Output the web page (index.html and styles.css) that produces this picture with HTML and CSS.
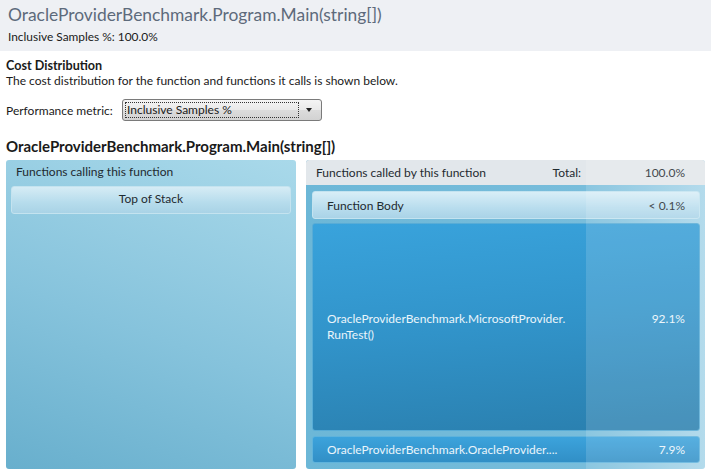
FILE: index.html
```html
<!DOCTYPE html>
<html>
<head>
<meta charset="utf-8">
<link rel="stylesheet" href="styles.css">
</head>
<body>
<div class="header">
  <div class="title">OracleProviderBenchmark.Program.Main(string[])</div>
  <div class="subtitle">Inclusive Samples %: 100.0%</div>
</div>
<div class="content">
  <div class="section-title">Cost Distribution</div>
  <div class="desc">The cost distribution for the function and functions it calls is shown below.</div>
  <div class="metric-row">
    <span class="metric-label">Performance metric:</span>
    <div class="combo">
      <span class="combo-focus">Inclusive Samples %</span>
      <span class="combo-arrow"></span>
    </div>
  </div>
  <div class="func-heading">OracleProviderBenchmark.Program.Main(string[])</div>
  <div class="panels">
    <div class="panel-left">
      <div class="panel-left-title">Functions calling this function</div>
      <div class="caller-btn">Top of Stack</div>
    </div>
    <div class="panel-right">
      <div class="pct-overlay"></div>
      <div class="right-header">
        <span class="rh-label">Functions called by this function</span>
        <span class="rh-total">Total:</span>
        <span class="rh-value">100.0%</span>
      </div>
      <div class="rows">
        <div class="row row-body">
          <span class="row-label">Function Body</span>
          <span class="row-value">&lt; 0.1%</span>
        </div>
        <div class="row row-big">
          <div class="row-inner">
            <span class="row-label">OracleProviderBenchmark.MicrosoftProvider.<br>RunTest()</span>
            <span class="row-value">92.1%</span>
          </div>
        </div>
        <div class="row row-small">
          <span class="row-label">OracleProviderBenchmark.OracleProvider....</span>
          <span class="row-value">7.9%</span>
        </div>
      </div>
    </div>
  </div>
</div>
</body>
</html>
```

FILE: styles.css
```css
* { box-sizing: border-box; }
html, body { margin: 0; padding: 0; }
body {
  width: 711px;
  height: 476px;
  overflow: hidden;
  background: #ffffff;
  font-family: "Lato", "Open Sans", sans-serif;
  font-size: 12px;
  color: #1a1a1a;
}
.header {
  background: #eef0f4;
  height: 51px;
  padding: 2px 8px 0 8px;
}
.title {
  font-size: 17.4px;
  line-height: 25px;
  color: #5d6a7b;
}
.subtitle {
  font-size: 11.9px;
  line-height: 16px;
  margin-top: 2px;
}
.content {
  padding: 7px 6px 0 6px;
}
.section-title {
  font-weight: bold;
  font-size: 12.6px;
  line-height: 15px;
}
.desc {
  font-size: 12px;
  line-height: 15px;
}
.metric-row {
  display: flex;
  align-items: center;
  margin-top: 11px;
  height: 22px;
}
.metric-label {
  font-size: 12px;
  width: 116px;
}
.combo {
  width: 200px;
  height: 22px;
  border: 1px solid #7a7a7a;
  border-radius: 3px;
  background: linear-gradient(#f4f4f4, #e9e9e9 50%, #dcdcdc 51%, #d2d2d2);
  display: flex;
  align-items: center;
  padding: 2px;
}
.combo-focus {
  flex: 1;
  height: 16px;
  border: 1px dotted #333;
  font-size: 12px;
  line-height: 14px;
  padding-left: 1px;
  white-space: nowrap;
  overflow: hidden;
}
.combo-arrow {
  width: 20px;
  display: flex;
  justify-content: center;
}
.combo-arrow::before {
  content: "";
  border-left: 3.5px solid transparent;
  border-right: 3.5px solid transparent;
  border-top: 4px solid #222;
}
.func-heading {
  font-weight: bold;
  font-size: 15px;
  line-height: 18px;
  margin-top: 16px;
}
.panels {
  display: flex;
  gap: 10px;
  margin-top: 5px;
  height: 309px;
}
.panel-left {
  width: 290px;
  border-radius: 3px;
  background: linear-gradient(20deg, #68afcd 0%, #86c3dc 45%, #a9d9ea 100%);
  padding: 4px 5px;
}
.panel-left-title {
  font-size: 12px;
  line-height: 16px;
  padding-left: 5px;
  color: #1f2a30;
}
.caller-btn {
  margin-top: 6px;
  height: 28px;
  border: 1px solid #c4e3ef;
  border-radius: 3px;
  background: linear-gradient(#d6ecf5, #b6dcec 60%, #a9d3e6);
  text-align: center;
  font-size: 12px;
  line-height: 24px;
  color: #1f2a30;
}
.panel-right {
  position: relative;
  width: 399px;
  border-radius: 3px;
  overflow: hidden;
  background: linear-gradient(90deg, #6cb7d7 0%, #78bddb 70%, #a8d5e9 100%);
  display: flex;
  flex-direction: column;
}
.pct-overlay {
  position: absolute;
  top: 0;
  bottom: 0;
  left: 280px;
  right: 0;
  background: rgba(255, 255, 255, 0.14);
  pointer-events: none;
}
.right-header {
  height: 25px;
  background: #e2e7eb;
  display: flex;
  align-items: center;
  padding: 0 0 0 10px;
  font-size: 12px;
  color: #1f2a30;
}
.rh-label { flex: 1; }
.rh-total { margin-right: 5px; }
.rh-value { width: 119px; padding-right: 20px; text-align: right; }
.rows {
  flex: 1;
  display: flex;
  flex-direction: column;
  gap: 4px;
  padding: 6px 5px 6px 6px;
}
.row {
  border-radius: 3px;
  display: flex;
  align-items: center;
  padding: 0 14px;
  font-size: 12px;
}
.row-label { flex: 1; }
.row-body {
  height: 28px;
  border: 1px solid #c3e3f0;
  background: linear-gradient(#d8eef7, #b9ddee 60%, #a9d3e7);
  color: #1f2a30;
}
.row-big {
  height: 208px;
  border: 1px solid #58acd6;
  background: linear-gradient(175deg, #39a3dc 0%, #3193c9 50%, #2a7fae 100%);
  color: #eaf5fb;
  line-height: 16px;
}
.row-inner {
  display: flex;
  align-items: flex-start;
  width: 100%;
}
.row-small {
  height: 27px;
  margin-top: 1px;
  border: 1px solid #5fb3dc;
  background: linear-gradient(#3ca3dc, #318fc6);
  color: #eaf5fb;
}
```
